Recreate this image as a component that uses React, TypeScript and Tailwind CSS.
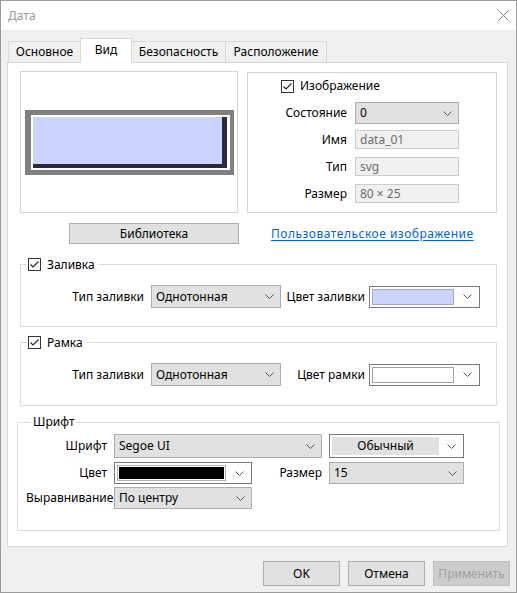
import type { ReactNode } from 'react';

function Check() {
  return (
    <span className="flex h-[13px] w-[13px] shrink-0 items-center justify-center border border-[#333333] bg-white">
      <svg width="11" height="11" viewBox="0 0 11 11">
        <path d="M1.5 5.5 L4 8 L9.5 2.5" fill="none" stroke="#222222" strokeWidth="1.1" />
      </svg>
    </span>
  );
}

function Chevron() {
  return (
    <svg width="9" height="5" viewBox="0 0 9 5" className="shrink-0">
      <path d="M0.5 0.5 L4.5 4.5 L8.5 0.5" fill="none" stroke="#555555" strokeWidth="1" />
    </svg>
  );
}

function Select({ value, className }: { value: string; className: string }) {
  return (
    <div className={`flex items-center justify-between border border-[#adadad] bg-[#e1e1e1] pl-[4px] pr-[6px] ${className}`}>
      <span className="whitespace-nowrap">{value}</span>
      <Chevron />
    </div>
  );
}

function ColorCombo({ swatch, className }: { swatch: string; className: string }) {
  return (
    <div className={`flex items-center gap-[9px] border border-[#7a7a7a] bg-white pl-[2px] pr-[7px] ${className}`}>
      <span className={`h-[16px] flex-1 border ${swatch}`} />
      <Chevron />
    </div>
  );
}

function ReadOnly({ value }: { value: string }) {
  return (
    <div className="flex h-[19px] w-[104px] items-center border border-[#cccccc] bg-[#f0f0f0] pl-[4px] text-[#6d6d6d]">
      {value}
    </div>
  );
}

function Row({ label, children }: { label: string; children: ReactNode }) {
  return (
    <div className="flex items-center">
      <span className="w-[99px] text-right">{label}</span>
      <div className="ml-[8px]">{children}</div>
    </div>
  );
}

function Tab({ label, active, className }: { label: string; active?: boolean; className: string }) {
  return (
    <div
      className={`-ml-px flex items-center justify-center border border-[#d9d9d9] ${
        active ? 'relative z-10 h-[25px] -mb-px border-b-0 bg-white pb-[3px]' : 'h-[21px] border-b-0 bg-[#f0f0f0]'
      } ${className}`}
    >
      {label}
    </div>
  );
}

function StyleRow({ labelText, colorLabel, combo }: { labelText: string; colorLabel: string; combo: ReactNode }) {
  return (
    <div className="mt-[14px] flex items-center">
      <span className="w-[123px] text-right">{labelText}</span>
      <Select value="Однотонная" className="ml-[7px] h-[23px] w-[130px]" />
      <span className="w-[84px] text-right">{colorLabel}</span>
      <div className="ml-[4px]">{combo}</div>
    </div>
  );
}

export default function App() {
  return (
    <div className="flex h-[593px] w-[517px] flex-col border border-[#9a9a9a] bg-[#f0f0f0] font-['Noto_Sans',sans-serif] text-[12px] leading-[16px] text-black">
      {/* title bar */}
      <div className="flex h-[29px] shrink-0 items-center justify-between bg-white pl-[7px] pr-[7px]">
        <span className="text-[#9a9a9a]">Дата</span>
        <svg width="11" height="11" viewBox="0 0 11 11">
          <path d="M0.5 0.5 L10.5 10.5 M10.5 0.5 L0.5 10.5" stroke="#808080" strokeWidth="1" />
        </svg>
      </div>

      <div className="pl-[6px] pt-[8px]">
        <div className="flex h-[24px] items-end pl-[2px]">
          <Tab label="Основное" className="w-[73px]" />
          <Tab label="Вид" active className="w-[52px]" />
          <Tab label="Безопасность" className="w-[95px]" />
          <Tab label="Расположение" className="w-[102px]" />
        </div>

        <div className="h-[485px] w-[501px] border border-[#d9d9d9] bg-white">
          {/* preview + image properties */}
          <div className="ml-[12px] mt-[8px] flex items-start gap-[9px]">
            <div className="flex h-[142px] w-[218px] items-center justify-center border border-[#d4d4d4]">
              <svg width="209" height="65" viewBox="0 0 209 65">
                <rect x="0" y="0" width="209" height="65" fill="#808080" />
                <rect x="6" y="5" width="199" height="55" fill="#ffffff" />
                <rect x="8" y="7" width="194" height="51" fill="#262a3a" />
                <rect x="8" y="7" width="189" height="47" fill="#cbd3ff" />
              </svg>
            </div>
            <div className="mt-px h-[141px] w-[250px] border border-[#d4d4d4]">
              <div className="ml-[33px] mt-[5px] flex items-center gap-[6px]">
                <Check />
                <span>Изображение</span>
              </div>
              <div className="mt-[8px] flex flex-col gap-[8px]">
                <Row label="Состояние">
                  <Select value="0" className="h-[22px] w-[104px]" />
                </Row>
                <div className="-mt-[2px]">
                  <Row label="Имя">
                    <ReadOnly value="data_01" />
                  </Row>
                </div>
                <Row label="Тип">
                  <ReadOnly value="svg" />
                </Row>
                <Row label="Размер">
                  <ReadOnly value="80 × 25" />
                </Row>
              </div>
            </div>
          </div>

          {/* library */}
          <div className="ml-[61px] mt-[10px] flex items-center gap-[32px]">
            <button type="button" className="h-[21px] w-[170px] border border-[#adadad] bg-[#e1e1e1]">
              Библиотека
            </button>
            <span className="tracking-[0.5px] text-[#0066cc] underline underline-offset-2">Пользовательское изображение</span>
          </div>

          {/* fill */}
          <fieldset className="ml-[12px] mt-[14px] w-[477px] border border-[#dcdcdc] pb-[18px]">
            <legend className="ml-[6px] flex h-[13px] items-center gap-[6px] pl-[1px] pr-[4px]">
              <Check />
              <span>Заливка</span>
            </legend>
            <StyleRow
              labelText="Тип заливки"
              colorLabel="Цвет заливки"
              combo={<ColorCombo swatch="border-[#a6aac0] bg-[#cbd3ff]" className="h-[22px] w-[111px]" />}
            />
          </fieldset>

          {/* frame */}
          <fieldset className="ml-[12px] mt-[9px] w-[477px] border border-[#dcdcdc] pb-[19px]">
            <legend className="ml-[6px] flex h-[13px] items-center gap-[6px] pl-[1px] pr-[4px]">
              <Check />
              <span>Рамка</span>
            </legend>
            <StyleRow
              labelText="Тип заливки"
              colorLabel="Цвет рамки"
              combo={<ColorCombo swatch="border-[#a0a0a0] bg-white" className="h-[22px] w-[111px]" />}
            />
          </fieldset>

          {/* font */}
          <fieldset className="ml-[9px] mt-[8px] w-[483px] border border-[#dcdcdc] pb-[21px] pl-[8px]">
            <legend className="ml-[5px] h-[16px] px-[2px] leading-[16px]">Шрифт</legend>
            <div className="mt-[4px] flex items-center">
              <span className="w-[81px] text-right">Шрифт</span>
              <Select value="Segoe UI" className="ml-[7px] h-[24px] w-[208px]" />
              <div className="ml-[7px] flex h-[24px] w-[135px] items-center gap-[8px] border border-[#7a7a7a] bg-white p-[2px] pr-[7px]">
                <span className="flex h-full flex-1 items-center justify-center bg-[#e1e1e1]">Обычный</span>
                <Chevron />
              </div>
            </div>
            <div className="mt-[4px] flex items-center">
              <span className="w-[81px] text-right">Цвет</span>
              <ColorCombo swatch="border-[#b0b0b0] bg-black outline outline-1 -outline-offset-2 outline-white" className="ml-[7px] h-[22px] w-[138px]" />
              <span className="w-[70px] text-right">Размер</span>
              <Select value="15" className="ml-[7px] h-[22px] w-[135px]" />
            </div>
            <div className="mt-[3px] flex items-center">
              <span className="w-[81px] text-right">Выравнивание</span>
              <Select value="По центру" className="ml-[7px] h-[22px] w-[138px]" />
            </div>
          </fieldset>
        </div>
      </div>

      {/* dialog buttons */}
      <div className="mt-[14px] flex justify-end gap-[8px] pr-[6px]">
        <button type="button" className="h-[25px] w-[77px] border border-[#adadad] bg-[#e1e1e1]">OK</button>
        <button type="button" className="h-[25px] w-[77px] border border-[#adadad] bg-[#e1e1e1]">Отмена</button>
        <button type="button" className="h-[25px] w-[77px] border border-[#bfbfbf] bg-[#cccccc] text-[#a0a0a0]">Применить</button>
      </div>
    </div>
  );
}
